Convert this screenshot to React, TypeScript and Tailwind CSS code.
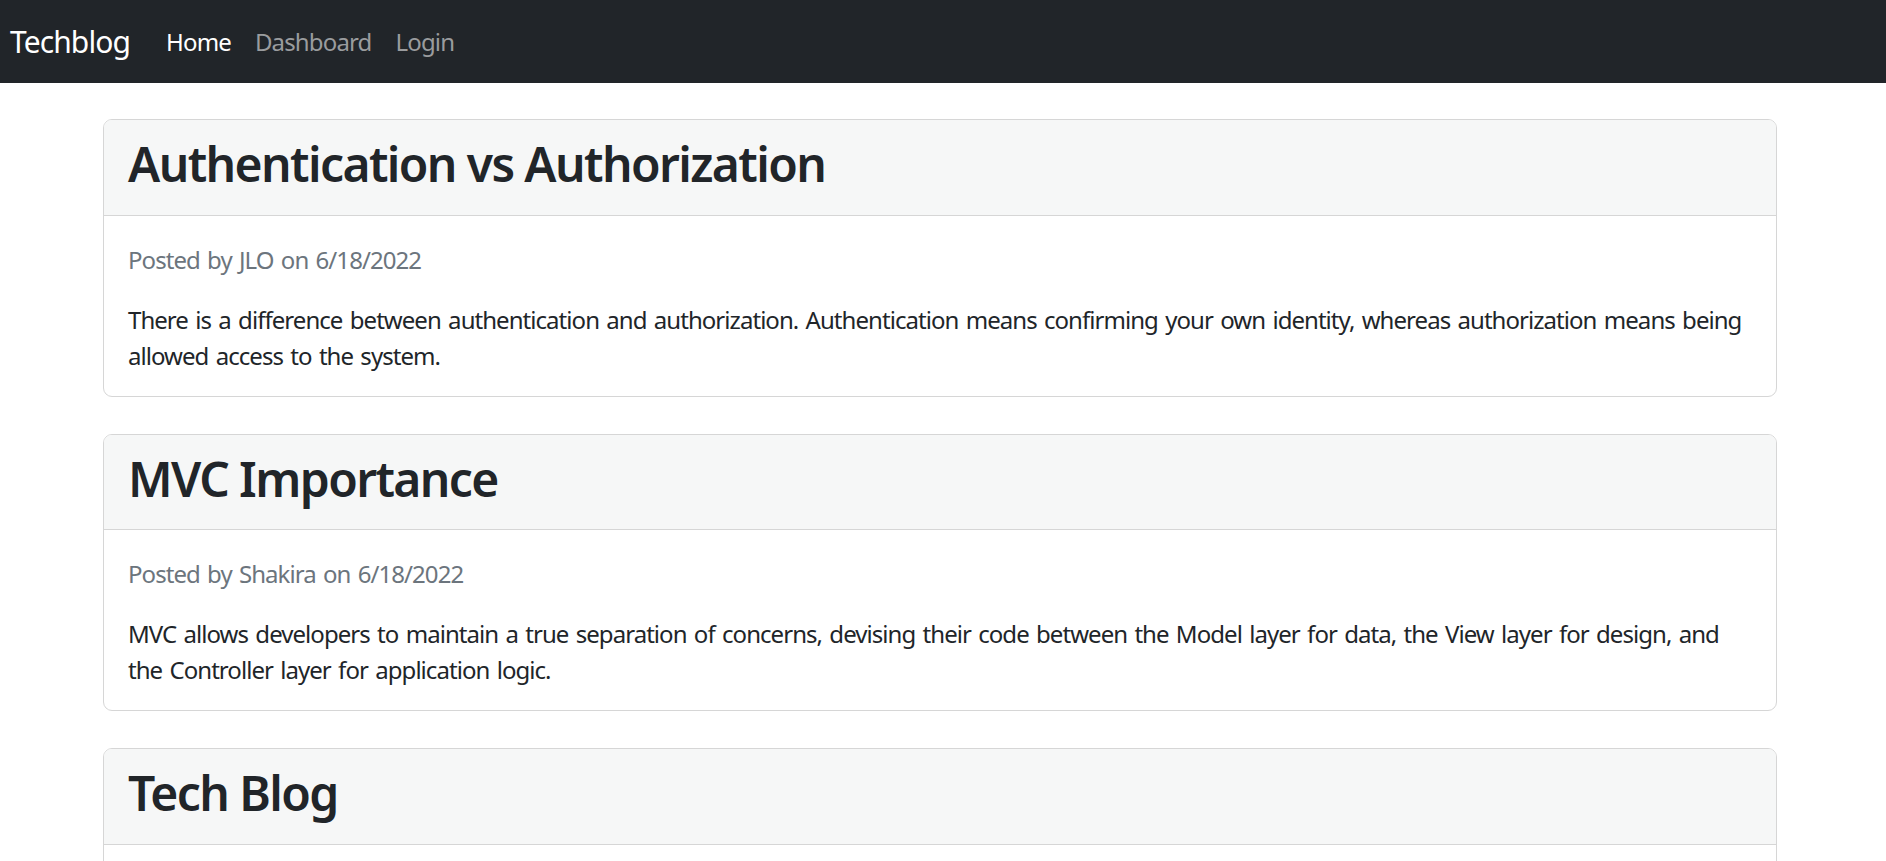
const posts = [
  {
    title: "Authentication vs Authorization",
    author: "JLO",
    date: "6/18/2022",
    body: "There is a difference between authentication and authorization. Authentication means confirming your own identity, whereas authorization means being allowed access to the system.",
  },
  {
    title: "MVC Importance",
    author: "Shakira",
    date: "6/18/2022",
    body: "MVC allows developers to maintain a true separation of concerns, devising their code between the Model layer for data, the View layer for design, and the Controller layer for application logic.",
  },
  {
    title: "Tech Blog",
    author: "Shakira",
    date: "6/18/2022",
    body: "Tech Blog is a CMS-style blog site where developers can publish their blog posts and comment on other developers' posts as well.",
  },
];

export default function App() {
  return (
    <div className="h-screen overflow-hidden bg-white font-['Noto_Sans',sans-serif] text-[#212529]">
      <nav className="flex h-[83px] items-center bg-[#212529] pl-[10px]">
        <a href="#" className="mr-[24px] text-[30px] leading-[45px] tracking-[-0.9px] text-white">
          Techblog
        </a>
        <div className="flex items-center tracking-[-0.85px]">
          <a href="#" className="px-[12px] text-[24px] leading-[36px] text-white">
            Home
          </a>
          <a href="#" className="px-[12px] text-[24px] leading-[36px] text-[#9a9c9e]">
            Dashboard
          </a>
          <a href="#" className="px-[12px] text-[24px] leading-[36px] text-[#9a9c9e]">
            Login
          </a>
        </div>
      </nav>

      <main className="ml-[103px] mt-[36px] flex w-[1674px] flex-col gap-[37px]">
        {posts.map((post) => (
          <div
            key={post.title}
            className="overflow-hidden rounded-[9px] border border-[#d6d6d6] bg-white"
          >
            <div className="border-b border-[#d6d6d6] bg-[#f6f7f7] px-[24px] pb-[11px] pt-[15px]">
              <h2 className="mb-[11px] text-[48px] font-semibold leading-[57.6px] tracking-[-1.6px]">
                {post.title}
              </h2>
            </div>
            <div className="px-[24px] pb-[22px] pt-[26px] text-[24px] leading-[36px] tracking-[-0.95px] [word-spacing:2px]">
              <p className="mb-[24px] text-[#6c757d]">
                Posted by {post.author} on {post.date}
              </p>
              <p>{post.body}</p>
            </div>
          </div>
        ))}
      </main>
    </div>
  );
}
